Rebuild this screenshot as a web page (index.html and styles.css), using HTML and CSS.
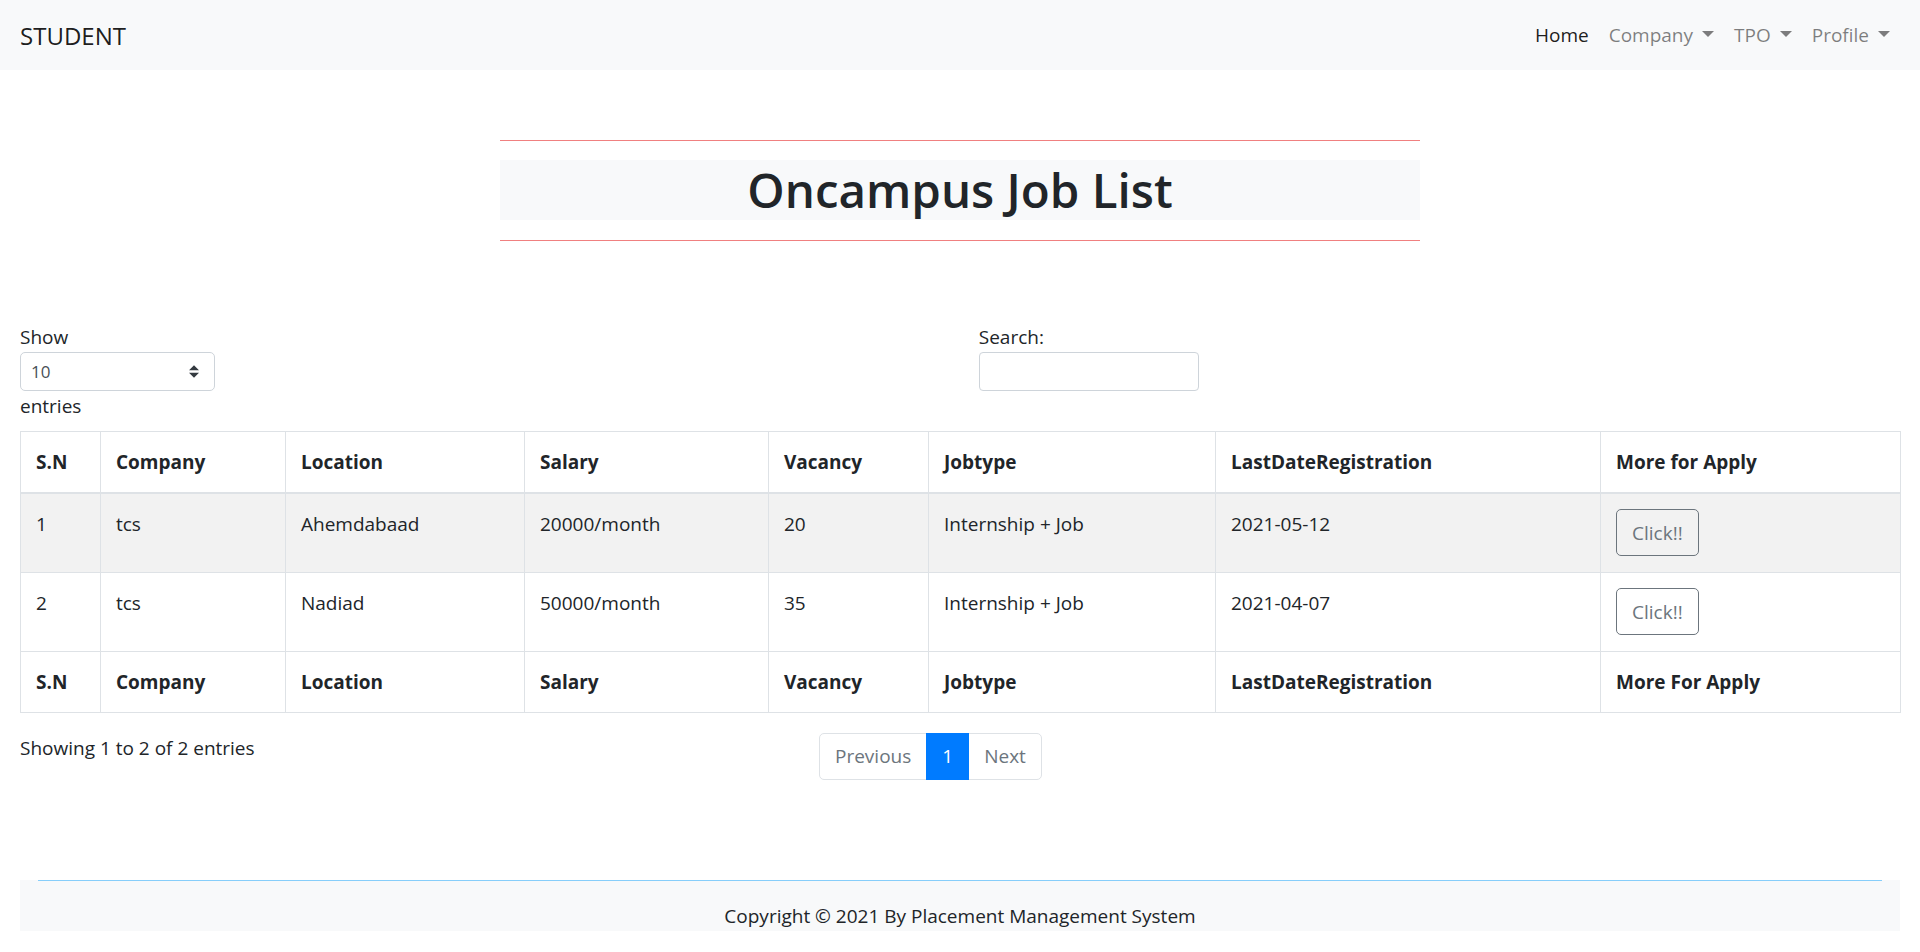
FILE: index.html
```html
<!DOCTYPE html>
<html lang="en">
<head>
<meta charset="utf-8">
<title>Oncampus Job List</title>
<link rel="stylesheet" href="styles.css">
</head>
<body>
<nav class="navbar">
  <a class="brand" href="#">STUDENT</a>
  <ul class="nav">
    <li><a class="nav-link active" href="#">Home</a></li>
    <li><a class="nav-link toggle" href="#">Company</a></li>
    <li><a class="nav-link toggle" href="#">TPO</a></li>
    <li><a class="nav-link toggle" href="#">Profile</a></li>
  </ul>
</nav>

<main class="page">
  <section class="title-block">
    <hr class="title-rule">
    <h1 class="title">Oncampus Job List</h1>
    <hr class="title-rule">
  </section>

  <section class="dt-wrapper">
    <div class="dt-top">
      <div class="dt-col">
        <label class="dt-label">Show</label>
        <div class="select-box">
          <span>10</span>
          <svg class="select-arrow" width="10" height="13" viewBox="0 0 4 5"><path d="M2 0L0 2h4zm0 5L0 3h4z" fill="#343a40"/></svg>
        </div>
        <div class="dt-label">entries</div>
      </div>
      <div class="dt-col">
        <label class="dt-label">Search:</label>
        <input class="search-input" type="search">
      </div>
    </div>

    <table class="jobs">
      <colgroup>
        <col class="w-sn"><col class="w-company"><col class="w-location"><col class="w-salary">
        <col class="w-vacancy"><col class="w-jobtype"><col class="w-date"><col class="w-apply">
      </colgroup>
      <thead>
        <tr>
          <th>S.N</th><th>Company</th><th>Location</th><th>Salary</th><th>Vacancy</th><th>Jobtype</th><th>LastDateRegistration</th><th>More for Apply</th>
        </tr>
      </thead>
      <tbody>
        <tr class="odd">
          <td>1</td><td>tcs</td><td>Ahemdabaad</td><td>20000/month</td><td>20</td><td>Internship + Job</td><td>2021-05-12</td><td><button class="btn-outline">Click!!</button></td>
        </tr>
        <tr>
          <td>2</td><td>tcs</td><td>Nadiad</td><td>50000/month</td><td>35</td><td>Internship + Job</td><td>2021-04-07</td><td><button class="btn-outline">Click!!</button></td>
        </tr>
      </tbody>
      <tfoot>
        <tr>
          <th>S.N</th><th>Company</th><th>Location</th><th>Salary</th><th>Vacancy</th><th>Jobtype</th><th>LastDateRegistration</th><th>More For Apply</th>
        </tr>
      </tfoot>
    </table>

    <div class="dt-bottom">
      <div class="dt-info">Showing 1 to 2 of 2 entries</div>
      <ul class="pagination">
        <li class="page-link disabled first">Previous</li>
        <li class="page-link active">1</li>
        <li class="page-link disabled last">Next</li>
      </ul>
    </div>
  </section>

  <footer class="footer">
    <hr class="footer-rule">
    <p class="copyright">Copyright © 2021 By Placement Management System</p>
  </footer>
</main>
</body>
</html>
```

FILE: styles.css
```css
* { box-sizing: border-box; }

html, body {
  margin: 0;
  padding: 0;
}

body {
  font-family: "Open Sans", "Noto Sans", sans-serif;
  font-size: 19px;
  line-height: 30px;
  color: #212529;
  background: #fff;
}

/* Navbar */
.navbar {
  height: 70px;
  background: #f8f9fa;
  display: flex;
  align-items: center;
  justify-content: space-between;
  padding: 0 20px;
}
.brand {
  font-size: 24px;
  line-height: 37px;
  color: rgba(0,0,0,.9);
  text-decoration: none;
}
.nav {
  list-style: none;
  margin: 0;
  padding: 0;
  display: flex;
}
.nav-link {
  display: block;
  padding: 10px;
  color: rgba(0,0,0,.5);
  text-decoration: none;
}
.nav-link.active { color: rgba(0,0,0,.9); }
.nav-link.toggle::after {
  content: "";
  display: inline-block;
  margin-left: 9px;
  vertical-align: 5px;
  border-top: 6px solid;
  border-left: 6px solid transparent;
  border-right: 6px solid transparent;
}

/* Page */
.page {
  padding: 0 20px;
}

.title-block {
  width: 920px;
  margin: 70px auto 0;
}
.title-rule {
  margin: 0;
  border: 0;
  border-top: 1px solid #f08080;
}
.title {
  margin: 19px 0 20px;
  background: #f8f9fa;
  text-align: center;
  font-size: 47.5px;
  line-height: 60px;
  font-weight: 600;
}

/* DataTables-like wrapper */
.dt-wrapper {
  margin-top: 81px;
}
.dt-top {
  display: grid;
  grid-template-columns: 1fr 1fr;
  column-gap: 37.5px;
}
.dt-col {
  display: flex;
  flex-direction: column;
  align-items: flex-start;
}
.dt-label {
  display: block;
  height: 30px;
}
.select-box {
  width: 195px;
  height: 39px;
  border: 1px solid #ced4da;
  border-radius: 5px;
  padding: 0 15px 0 10px;
  display: flex;
  align-items: center;
  justify-content: space-between;
  font-size: 17px;
  color: #495057;
  background: #fff;
}
.search-input {
  width: 220px;
  height: 39px;
  border: 1px solid #ced4da;
  border-radius: 4px;
  background: #fff;
  font: inherit;
  padding: 0 10px;
}

.jobs {
  width: 100%;
  table-layout: fixed;
  border-collapse: collapse;
  margin: 10px 0 20px;
  color: #212529;
}
.w-sn { width: 80px; }
.w-company { width: 185px; }
.w-location { width: 239px; }
.w-salary { width: 244px; }
.w-vacancy { width: 160px; }
.w-jobtype { width: 287px; }
.w-date { width: 385px; }
.w-apply { width: 300px; }

.jobs th,
.jobs td {
  border: 1px solid #dee2e6;
  padding: 15px;
  text-align: left;
  vertical-align: top;
  line-height: 30px;
}
.jobs td { padding-bottom: 16px; }
.jobs th { font-weight: 700; }
.jobs thead th { border-bottom-width: 2px; }
.jobs tbody tr.odd { background: #f2f2f2; }

.btn-outline {
  font: inherit;
  font-size: 19px;
  line-height: 30px;
  padding: 7.5px 15px;
  color: #6c757d;
  background: transparent;
  border: 1px solid #6c757d;
  border-radius: 5px;
}

.dt-bottom {
  display: grid;
  grid-template-columns: 761.5px 1fr;
  column-gap: 37.5px;
}
.dt-info {
  line-height: 30px;
}
.pagination {
  list-style: none;
  margin: 0;
  padding: 0;
  display: flex;
}
.page-link {
  padding: 10px 15px;
  line-height: 25px;
  border: 1px solid #dee2e6;
  margin-left: -1px;
  color: #6c757d;
  background: #fff;
}
.page-link.first {
  margin-left: 0;
  border-radius: 5px 0 0 5px;
}
.page-link.last { border-radius: 0 5px 5px 0; }
.page-link.active {
  background: #007bff;
  border-color: #007bff;
  color: #fff;
  position: relative;
}

/* Footer */
.footer {
  margin-top: 100px;
  background: #f8f9fa;
  padding: 0 18px;
}
.footer-rule {
  margin: 0 0 20px;
  border: 0;
  border-top: 1px solid #87cefa;
}
.copyright {
  margin: 0;
  text-align: center;
  line-height: 30px;
}
```
